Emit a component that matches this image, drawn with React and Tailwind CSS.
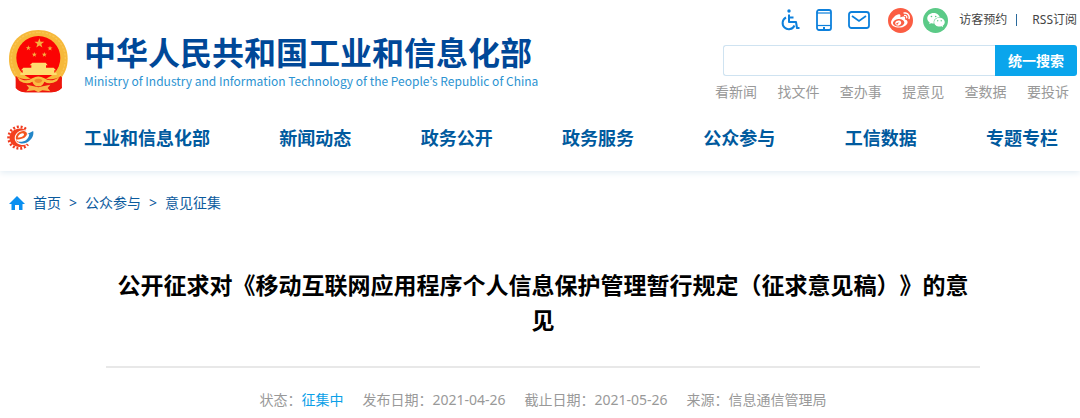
import { FaWeibo } from "react-icons/fa";
import { AiFillWechat } from "react-icons/ai";

const NAV = ["工业和信息化部", "新闻动态", "政务公开", "政务服务", "公众参与", "工信数据", "专题专栏"];
const QUICK = ["看新闻", "找文件", "查办事", "提意见", "查数据", "要投诉"];
const STAR = "0,-10 2.4,-3.1 9.5,-3.1 3.8,1.2 5.9,8.1 0,4 -5.9,8.1 -3.8,1.2 -9.5,-3.1 -2.4,-3.1";

function Emblem() {
  return (
    <svg viewBox="0 0 177 189" className="h-[63px] w-[59px] shrink-0" aria-hidden="true">
      <path d="M20 130 22 174 Q34 187 50 187 L126 187 Q145 187 157 174 L160 130Z" fill="#e8140c" />
      <path d="M88 0C140 0 176 38 176 86c0 26-9 46-23 60l-10 6H33l-10-6C9 132 0 112 0 86 0 38 36 0 88 0Z" fill="#f6b93b" />
      <path d="M88 7C136 7 169 42 169 86c0 24-9 44-22 58" fill="none" stroke="#fbc552" strokeWidth="4" strokeDasharray="7 4" />
      <path d="M88 7C40 7 7 42 7 86c0 24 9 44 22 58" fill="none" stroke="#fbc552" strokeWidth="4" strokeDasharray="7 4" />
      <circle cx="88" cy="84" r="66" fill="#fb0303" />
      <g fill="#f6b040">
        <polygon points={STAR} transform="translate(91 40) scale(1.55)" />
        <polygon points={STAR} transform="translate(58 54) scale(.8)" />
        <polygon points={STAR} transform="translate(123 55) scale(.8)" />
        <polygon points={STAR} transform="translate(76 74) scale(.8)" />
        <polygon points={STAR} transform="translate(106 74) scale(.8)" />
      </g>
      <path d="M70 98h40l6 8h-5v7h23l7 8h-5v7h7v7H34v-7h7v-7h-5l7-8h24v-7h-5z" fill="#ffdc70" />
      <path d="M20 138c20 12 36 12 48 6q20-10 40 0c12 6 30 6 48-6l3 36q-14 13-33 13H50q-18 0-30-13z" fill="#ee160c" />
      <path d="M24 140q26 19 46 5 18-11 36 0 20 14 46-5l-8 13q-22 13-38 2-5 14-18 14t-18-14q-16 11-38-2z" fill="#f9bd42" />
      <path d="M76 150q12-8 24 0-2 9-12 9t-12-9z" fill="#f08a2a" />
      <path d="M52 164q20 4 36 8 16-4 36-8l-8 10 8 10-24-3-12 6-12-6-24 3 8-10z" fill="#f9b648" />
    </svg>
  );
}

function GearMark() {
  return (
    <svg viewBox="0 0 84 76" className="h-[25px] w-[28px]" aria-hidden="true">
      <path d="M60 12 A33 33 0 1 0 66 59" fill="none" stroke="#f03a1e" strokeWidth="8" strokeDasharray="6 5.500" />
      <path d="M62 17C42 3 10 14 10 39c0 27 34 37 56 19-20 7-40-1-40-18 0-15 16-27 36-23Z" fill="#f4401e" />
      <path d="M30 44c-4-14 10-27 24-26 13 2 12 16-2 22-7 3-14 4-22 4 2 6 8 8 16 8-8 4-16 0-16-8Zm5-6c12 0 20-5 19-11-2-5-16-1-19 11Z" fill="#f4561f" />
      <path d="M38 51c18 2 31-9 32-24l-7 1 19-10c5 20-16 40-36 38-4 0-7-2-8-5Z" fill="#2386c8" />
    </svg>
  );
}

function Wheelchair() {
  return (
    <svg viewBox="0 0 20 22" className="h-[22px] w-[20px]" fill="none" stroke="#0d80dc" strokeWidth="2" strokeLinejoin="round" aria-hidden="true">
      <circle cx="9" cy="2" r="1.7" fill="#0d80dc" stroke="none" />
      <path d="M9 5.500v7.500h7l1 6h2.500M9 8.500h4.500" />
      <path d="M6 8.500a6.200 6.200 0 1 0 8.500 8" />
    </svg>
  );
}

function Phone() {
  return (
    <svg viewBox="0 0 16 22" className="h-[22px] w-[16px]" fill="none" stroke="#0d80dc" strokeWidth="1.8" aria-hidden="true">
      <rect x="1" y="1" width="14" height="20" rx="2" />
      <path d="M1 4h14" strokeWidth="1.2" />
      <path d="M1 16.500h14" strokeWidth="1.2" />
      <path d="M7 19h2" strokeWidth="2" />
    </svg>
  );
}

function Mail() {
  return (
    <svg viewBox="0 0 22 18" className="h-[18px] w-[22px]" fill="none" stroke="#0d80dc" strokeWidth="1.8" aria-hidden="true">
      <rect x="1" y="1" width="20" height="16" rx="2.500" />
      <path d="m4 5 7 5 7-5" />
    </svg>
  );
}

export default function App() {
  return (
    <div className="bg-white pb-2 font-['Noto_Sans','Noto_Sans_CJK_SC',sans-serif]">
      <header className="shadow-[0_2px_6px_#e4eef5]">
        <div className="flex justify-between pr-[3px] pl-[9px]">
          <a href="#home" className="flex items-start gap-4 pt-[30px]">
            <Emblem />
            <span className="whitespace-nowrap">
              <span className="block font-['Noto_Sans_CJK_SC',sans-serif] text-[32px] leading-[42px] font-bold text-[#004898]">
                中华人民共和国工业和信息化部
              </span>
              <span lang="en" className="block font-['Noto_Sans_CJK_KR',sans-serif] text-xs leading-[18px] text-[#2c93d1]">
                Ministry of Industry and Information Technology of the People’s Republic of China
              </span>
            </span>
          </a>
          <div className="w-[362px]">
            <div className="flex h-10 items-center justify-end text-xs whitespace-nowrap text-[#444]">
              <a href="#accessible" aria-label="无障碍" className="mr-4"><Wheelchair /></a>
              <a href="#mobile" aria-label="手机版" className="mr-4"><Phone /></a>
              <a href="#mail" aria-label="邮箱" className="mr-[18px]"><Mail /></a>
              <a href="#weibo" aria-label="微博" className="mr-[10px] flex size-[25px] items-center justify-center rounded-full bg-[#fb5d43] text-white">
                <FaWeibo size={19} />
              </a>
              <a href="#wechat" aria-label="微信" className="mr-[11px] flex size-[25px] items-center justify-center rounded-full bg-[#5bca87] text-white">
                <AiFillWechat size={20} />
              </a>
              <a href="#visit">访客预约</a>
              <span className="mr-[15px] ml-[9px] h-3 w-px bg-[#2a6a9c]" />
              <a href="#rss">RSS订阅</a>
            </div>
            <form className="mt-[5px] ml-2 flex h-[31px]" onSubmit={(e) => e.preventDefault()}>
              <input type="text" aria-label="搜索" className="min-w-0 flex-1 rounded-l-[3px] border border-r-0 border-[#cfe3f1] px-2 text-sm outline-none" />
              <button type="submit" className="w-[82px] rounded-r-[3px] bg-[#0aa5ec] text-sm font-bold text-white">统一搜索</button>
            </form>
            <div className="mt-1 flex justify-between pr-2 text-sm leading-6 text-[#999]">
              {QUICK.map((q) => <a key={q} href="#quick">{q}</a>)}
            </div>
          </div>
        </div>
        <nav className="flex h-[67px] items-center pr-[22px] pl-[6px]">
          <a href="#mark" aria-label="首页标志" className="w-[78px]"><GearMark /></a>
          <div className="flex flex-1 justify-between text-lg font-bold whitespace-nowrap text-[#005a9e]">
            {NAV.map((n) => <a key={n} href="#nav">{n}</a>)}
          </div>
        </nav>
      </header>
      <div className="flex items-center pt-5 pl-[9px] text-sm leading-6 text-[#0b5a9d]">
        <svg viewBox="0 0 16 14" className="mr-2 h-[14px] w-[16px]" fill="#0a8ff0" aria-hidden="true">
          <path d="M8 0 16 8h-2.500v6H10V9H6v5H2.500V8H0Z" />
        </svg>
        <a href="#index">首页</a>
        <span className="mx-2">&gt;</span>
        <a href="#public">公众参与</a>
        <span className="mx-2">&gt;</span>
        <a href="#opinions">意见征集</a>
      </div>
      <main className="mx-[100px] pl-[6px]">
        <h1 className="border-b-2 border-[#e8e8e8] px-1 pt-[53px] pb-[28px] text-center text-[23px] leading-[35px] font-bold text-black [text-spacing-trim:space-all]">
          公开征求对《移动互联网应用程序个人信息保护管理暂行规定（征求意见稿）》的意见
        </h1>
        <p className="flex justify-center gap-[19px] pt-5 text-sm leading-6 whitespace-nowrap text-[#999]">
          <span>状态：<span className="text-[#0aa0e8]">征集中</span></span>
          <span>发布日期：2021-04-26</span>
          <span>截止日期：2021-05-26</span>
          <span>来源：信息通信管理局</span>
        </p>
      </main>
    </div>
  );
}
